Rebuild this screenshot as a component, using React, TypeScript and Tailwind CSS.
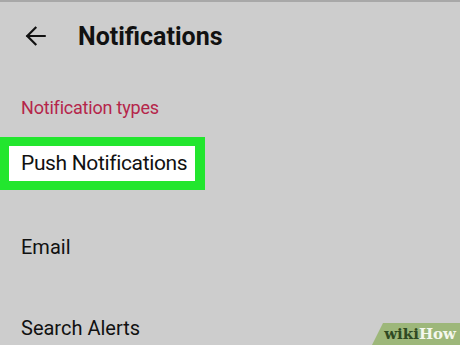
import React from "react";

export default function App() {
  return (
    <div
      className="relative w-[460px] h-[345px] overflow-hidden bg-[#cdcdcd]"
      style={{ fontFamily: "Roboto, 'Liberation Sans', sans-serif" }}
    >
      <div className="h-[2px] bg-[#a8a8a8]" />
      <div className="flex items-center h-[70px] pl-[24px] pb-[2px]">
        <svg width="23" height="22" viewBox="0 0 24 24" className="shrink-0">
          <path
            d="M22 12H3M12 3L3 12l9 9"
            fill="none"
            stroke="#111"
            strokeWidth="2.4"
            strokeLinecap="square"
          />
        </svg>
        <span className="ml-[31px] text-[25px] font-bold text-[#111] leading-none">
          Notifications
        </span>
      </div>
      <div className="pl-[21px] mt-[27px] text-[18px] leading-none text-[#b5254a] tracking-[-0.2px]">
        Notification types
      </div>
      <div className="mt-[20px] w-[205px] h-[53px] bg-[#22e62e] p-[9px] pr-[10px]">
        <div className="h-full bg-white flex items-center pl-[12px] pt-[1px] text-[21px] text-[#111] tracking-[-0.35px]">
          Push Notifications
        </div>
      </div>
      <div className="pl-[21px] mt-[47px] text-[20px] leading-none text-[#111]">Email</div>
      <div className="pl-[21px] mt-[61px] text-[20px] leading-none text-[#111]">Search Alerts</div>
      <div
        className="absolute right-0 bottom-0 w-[88px] h-[22px] bg-[#9db77a] flex items-center justify-end pr-[4px]"
        style={{ clipPath: "polygon(11px 0, 100% 0, 100% 100%, 0 100%)" }}
      >
        <span
          className="text-[15px] font-bold leading-none"
          style={{ fontFamily: "'DejaVu Serif', 'Liberation Serif', serif" }}
        >
          <span className="text-[#2f4a22]">wiki</span>
          <span className="text-[#f4f7ee]">How</span>
        </span>
      </div>
    </div>
  );
}
